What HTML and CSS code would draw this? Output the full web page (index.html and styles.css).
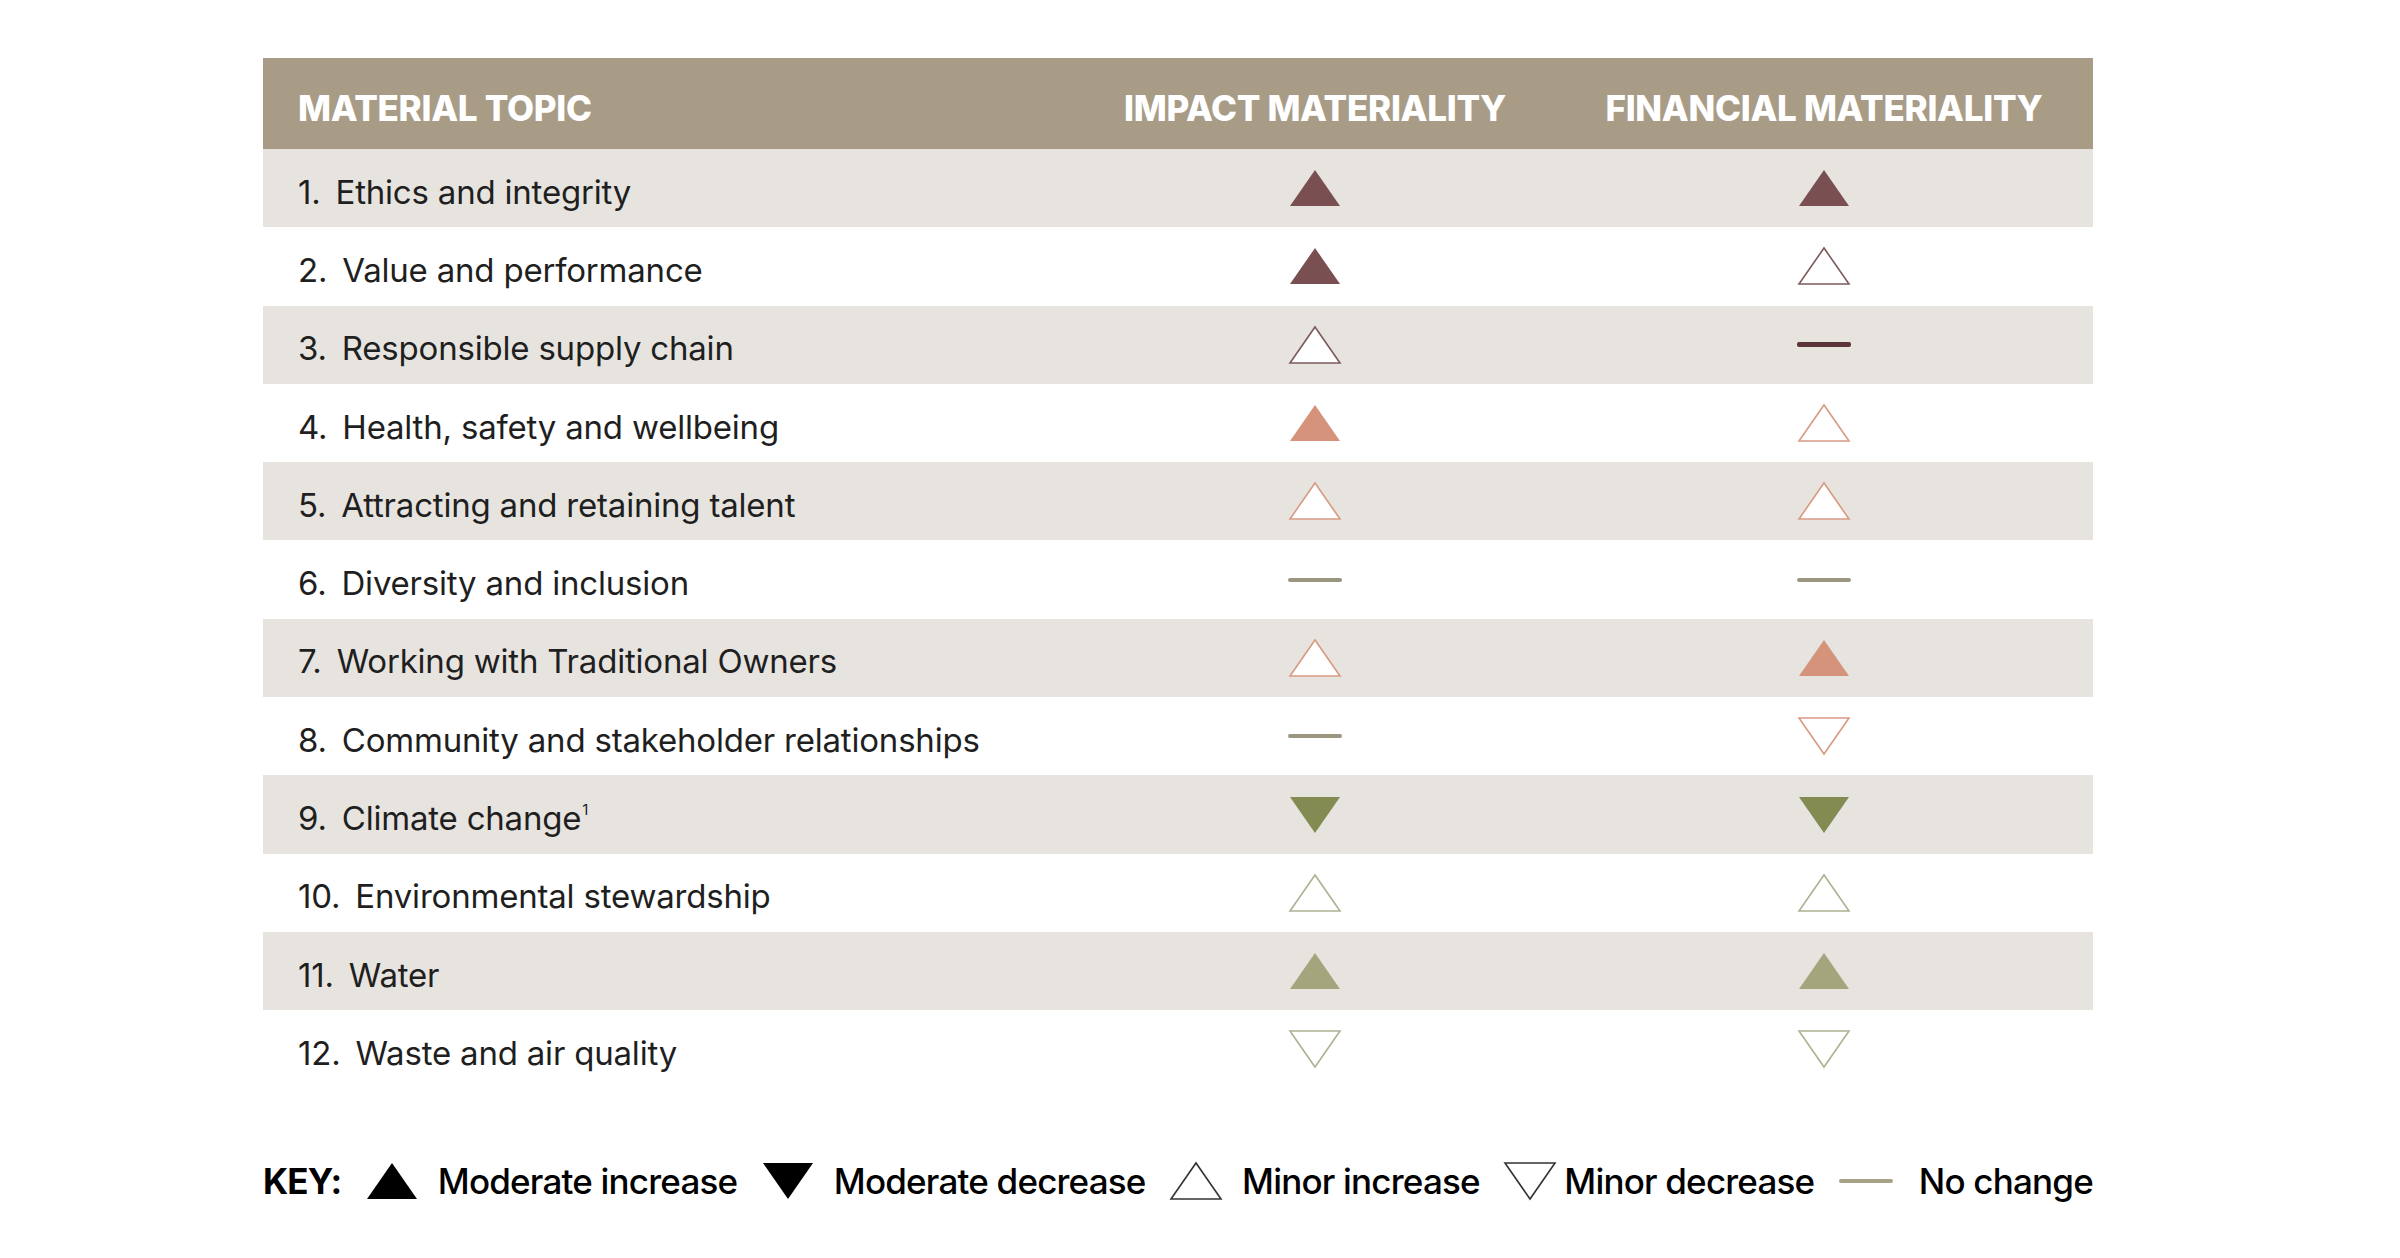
FILE: index.html
```html
<!DOCTYPE html>
<html lang="en">
<head>
<meta charset="utf-8">
<title>Material topics</title>
<link rel="stylesheet" href="styles.css">
</head>
<body>
<div class="page">
  <div class="table">
    <div class="row head">
      <div class="cell topic">MATERIAL TOPIC</div>
      <div class="cell mark">IMPACT MATERIALITY</div>
      <div class="cell mark">FINANCIAL MATERIALITY</div>
    </div>

    <div class="row shade">
      <div class="cell topic"><span class="num">1.</span>Ethics and integrity</div>
      <div class="cell mark"><svg class="ico solid maroon" viewBox="0 0 52 38"><polygon points="1,37 26,1 51,37"/></svg></div>
      <div class="cell mark"><svg class="ico solid maroon" viewBox="0 0 52 38"><polygon points="1,37 26,1 51,37"/></svg></div>
    </div>

    <div class="row">
      <div class="cell topic"><span class="num">2.</span>Value and performance</div>
      <div class="cell mark"><svg class="ico solid maroon" viewBox="0 0 52 38"><polygon points="1,37 26,1 51,37"/></svg></div>
      <div class="cell mark"><svg class="ico line maroon" viewBox="0 0 52 38"><polygon points="1,37 26,1 51,37"/></svg></div>
    </div>

    <div class="row shade">
      <div class="cell topic"><span class="num">3.</span>Responsible supply chain</div>
      <div class="cell mark"><svg class="ico line maroon" viewBox="0 0 52 38"><polygon points="1,37 26,1 51,37"/></svg></div>
      <div class="cell mark"><span class="dash maroon"></span></div>
    </div>

    <div class="row">
      <div class="cell topic"><span class="num">4.</span>Health, safety and wellbeing</div>
      <div class="cell mark"><svg class="ico solid salmon" viewBox="0 0 52 38"><polygon points="1,37 26,1 51,37"/></svg></div>
      <div class="cell mark"><svg class="ico line salmon" viewBox="0 0 52 38"><polygon points="1,37 26,1 51,37"/></svg></div>
    </div>

    <div class="row shade">
      <div class="cell topic"><span class="num">5.</span>Attracting and retaining talent</div>
      <div class="cell mark"><svg class="ico line salmon" viewBox="0 0 52 38"><polygon points="1,37 26,1 51,37"/></svg></div>
      <div class="cell mark"><svg class="ico line salmon" viewBox="0 0 52 38"><polygon points="1,37 26,1 51,37"/></svg></div>
    </div>

    <div class="row">
      <div class="cell topic"><span class="num">6.</span>Diversity and inclusion</div>
      <div class="cell mark"><span class="dash"></span></div>
      <div class="cell mark"><span class="dash"></span></div>
    </div>

    <div class="row shade">
      <div class="cell topic"><span class="num">7.</span>Working with Traditional Owners</div>
      <div class="cell mark"><svg class="ico line salmon" viewBox="0 0 52 38"><polygon points="1,37 26,1 51,37"/></svg></div>
      <div class="cell mark"><svg class="ico solid salmon" viewBox="0 0 52 38"><polygon points="1,37 26,1 51,37"/></svg></div>
    </div>

    <div class="row">
      <div class="cell topic"><span class="num">8.</span>Community and stakeholder relationships</div>
      <div class="cell mark"><span class="dash"></span></div>
      <div class="cell mark"><svg class="ico line salmon" viewBox="0 0 52 38"><polygon points="1,1 51,1 26,37"/></svg></div>
    </div>

    <div class="row shade">
      <div class="cell topic"><span class="num">9.</span>Climate change<sup class="fn">1</sup></div>
      <div class="cell mark"><svg class="ico solid olive-dark" viewBox="0 0 52 38"><polygon points="1,1 51,1 26,37"/></svg></div>
      <div class="cell mark"><svg class="ico solid olive-dark" viewBox="0 0 52 38"><polygon points="1,1 51,1 26,37"/></svg></div>
    </div>

    <div class="row">
      <div class="cell topic"><span class="num">10.</span>Environmental stewardship</div>
      <div class="cell mark"><svg class="ico line olive" viewBox="0 0 52 38"><polygon points="1,37 26,1 51,37"/></svg></div>
      <div class="cell mark"><svg class="ico line olive" viewBox="0 0 52 38"><polygon points="1,37 26,1 51,37"/></svg></div>
    </div>

    <div class="row shade">
      <div class="cell topic"><span class="num">11.</span>Water</div>
      <div class="cell mark"><svg class="ico solid olive" viewBox="0 0 52 38"><polygon points="1,37 26,1 51,37"/></svg></div>
      <div class="cell mark"><svg class="ico solid olive" viewBox="0 0 52 38"><polygon points="1,37 26,1 51,37"/></svg></div>
    </div>

    <div class="row">
      <div class="cell topic"><span class="num">12.</span>Waste and air quality</div>
      <div class="cell mark"><svg class="ico line olive" viewBox="0 0 52 38"><polygon points="1,1 51,1 26,37"/></svg></div>
      <div class="cell mark"><svg class="ico line olive" viewBox="0 0 52 38"><polygon points="1,1 51,1 26,37"/></svg></div>
    </div>
  </div>

  <div class="key">
    <span class="key-title">KEY:</span>
    <span class="key-item"><svg class="ico solid black" viewBox="0 0 52 38"><polygon points="1,37 26,1 51,37"/></svg><span>Moderate increase</span></span>
    <span class="key-item"><svg class="ico solid black" viewBox="0 0 52 38"><polygon points="1,1 51,1 26,37"/></svg><span>Moderate decrease</span></span>
    <span class="key-item"><svg class="ico line black" viewBox="0 0 52 38"><polygon points="1,37 26,1 51,37"/></svg><span>Minor increase</span></span>
    <span class="key-item tight"><svg class="ico line black" viewBox="0 0 52 38"><polygon points="1,1 51,1 26,37"/></svg><span>Minor decrease</span></span>
    <span class="key-item wide"><span class="dash key-dash"></span><span>No change</span></span>
  </div>
</div>
</body>
</html>
```

FILE: styles.css
```css
* { box-sizing: border-box; }

html, body {
  margin: 0;
  padding: 0;
  background: #ffffff;
}

body {
  font-family: "Inter", "Liberation Sans", sans-serif;
  color: #1f1f1f;
}

.page {
  padding: 58px 0 0 263px;
  width: 2093px;
}

.table {
  width: 1830px;
  display: flex;
  flex-direction: column;
}

.row {
  display: grid;
  grid-template-columns: 812px 480px 538px;
  height: 78.3px;
  align-items: center;
  background: #ffffff;
}

.row.shade {
  background: #e7e4df;
}

.row.head {
  height: 91px;
  background: #a89c87;
  color: #ffffff;
  font-weight: 800;
  font-size: 35px;
  letter-spacing: -0.3px;
  padding-top: 9px;
}

.cell {
  display: flex;
  align-items: center;
}

.cell.topic {
  padding-left: 35px;
  font-size: 33px;
  letter-spacing: -0.2px;
  padding-top: 7px;
}

.head .cell.topic {
  font-size: 35px;
  letter-spacing: -0.3px;
  padding-top: 0;
}

.cell.mark {
  justify-content: center;
}

.num {
  margin-right: 15px;
}

.fn {
  font-size: 15px;
  align-self: flex-start;
  margin-top: 2px;
  margin-left: 1px;
}

.ico {
  width: 52px;
  height: 38px;
  display: block;
  overflow: visible;
}

.ico.line {
  fill: #ffffff;
  stroke-width: 1.6;
  stroke-linejoin: miter;
}

.solid.maroon { fill: #7a4f51; }
.line.maroon { stroke: #7d5a5c; }

.solid.salmon { fill: #d4937a; }
.line.salmon { stroke: #d99a84; }

.solid.olive-dark { fill: #838a52; }
.solid.olive { fill: #a3a67c; }
.line.olive { stroke: #aeb192; }

.solid.black { fill: #000000; }
.line.black { stroke: #333333; stroke-width: 1.6; }

.dash {
  display: block;
  width: 54px;
  height: 4px;
  border-radius: 2px;
  background: #9b9680;
}

.dash.maroon {
  height: 5px;
  background: #5b3539;
}

.key {
  margin-top: 71px;
  width: 1830px;
  display: flex;
  align-items: center;
  justify-content: space-between;
  font-size: 35px;
  font-weight: 500;
  letter-spacing: -0.8px;
  color: #000000;
}

.key-title {
  font-weight: 700;
}

.key-item {
  display: flex;
  align-items: center;
  gap: 20px;
}

.key-item.tight {
  gap: 8px;
}

.key-item.wide {
  gap: 26px;
}

.key-dash {
  background: #a7a188;
}
```
